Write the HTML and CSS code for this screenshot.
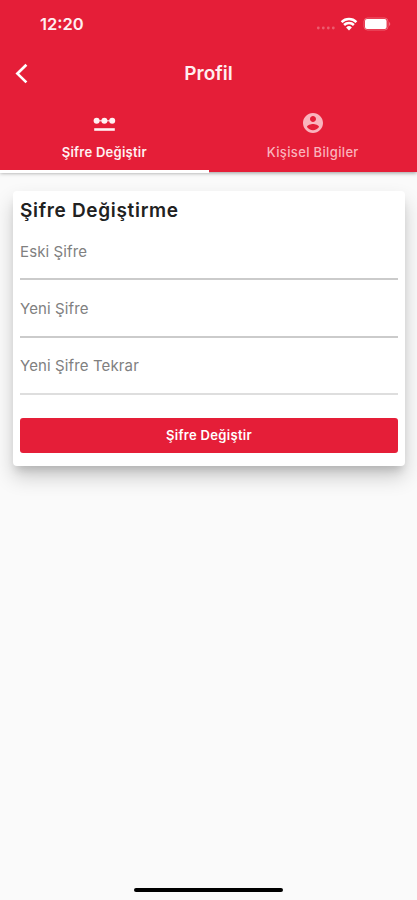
FILE: index.html
```html
<!DOCTYPE html>
<html lang="tr">
<head>
  <meta charset="UTF-8">
  <meta name="viewport" content="width=device-width, initial-scale=1.0">
  <title>Profil</title>
  <link rel="stylesheet" href="styles.css">
</head>
<body>
  <header class="header">
    <div class="status">
      <span class="time">12:20</span>
      <svg class="signal" width="20" height="4" viewBox="0 0 20 4">
        <circle cx="2.3" cy="2" r="1.4"/><circle cx="7.3" cy="2" r="1.4"/><circle cx="12.3" cy="2" r="1.4"/><circle cx="17.3" cy="2" r="1.4"/>
      </svg>
      <svg class="wifi" width="18" height="14" viewBox="0 0 18 14">
        <path d="M1.6 5.1a10.4 10.4 0 0 1 14.8 0M4.1 8a6.9 6.9 0 0 1 9.8 0"/>
        <path class="wifi-dot" d="M9 13.6L6.1 10.5a4.1 4.1 0 0 1 5.8 0z"/>
      </svg>
      <svg class="battery" width="28" height="14" viewBox="0 0 28 14">
        <rect class="battery-case" x="1" y="1" width="24" height="12" rx="3.5"/>
        <rect x="2" y="2" width="21.6" height="10" rx="2"/>
        <path class="battery-tip" d="M26 5v4a2.2 2.2 0 0 0 0-4z"/>
      </svg>
    </div>
    <div class="topbar">
      <a href="#" class="back">
        <svg width="14" height="22" viewBox="0 0 14 22"><path d="M12.4 1.8L3.4 10.6l9 8.8"/></svg>
      </a>
      <h1 class="title">Profil</h1>
    </div>
    <nav class="tabs">
      <a href="#" class="tab active">
        <svg width="24" height="24" viewBox="0 0 24 24">
          <path d="M2.2 17.2h20.6v2.6H2.2z"/>
          <circle cx="4.6" cy="9.8" r="3"/><circle cx="12.4" cy="9.8" r="3"/><circle cx="20.2" cy="9.8" r="3"/>
          <path d="M4 9.3h16v1H4z"/>
        </svg>
        <span>Şifre Değiştir</span>
      </a>
      <a href="#" class="tab">
        <svg width="24" height="24" viewBox="0 0 24 24">
          <path d="M12 2C6.48 2 2 6.48 2 12s4.48 10 10 10 10-4.48 10-10S17.52 2 12 2zm0 3c1.66 0 3 1.34 3 3s-1.34 3-3 3-3-1.34-3-3 1.34-3 3-3zm0 14.2c-2.5 0-4.71-1.28-6-3.22.03-1.99 4-3.08 6-3.08 1.99 0 5.97 1.09 6 3.08-1.29 1.94-3.5 3.22-6 3.22z"/>
        </svg>
        <span>Kişisel Bilgiler</span>
      </a>
    </nav>
  </header>

  <main class="content">
    <form class="card">
      <h2 class="card-title">Şifre Değiştirme</h2>
      <input class="field" type="password" placeholder="Eski Şifre">
      <input class="field" type="password" placeholder="Yeni Şifre">
      <input class="field last" type="password" placeholder="Yeni Şifre Tekrar">
      <button class="submit" type="button">Şifre Değiştir</button>
    </form>
  </main>

  <div class="home-bar"></div>
</body>
</html>
```
FILE: styles.css
```css
* {
  margin: 0;
  padding: 0;
  box-sizing: border-box;
  font-family: Inter, "Liberation Sans", sans-serif;
}

body {
  display: flex;
  flex-direction: column;
  height: 900px;
  background: #fafafa;
  overflow: hidden;
}

a {
  color: inherit;
  text-decoration: none;
}

svg {
  display: block;
  fill: currentColor;
}

.header {
  height: 172px;
  background: #e51e38;
  color: #fff;
  box-shadow: 0 1px 4px rgba(0, 0, 0, 0.4);
}

/* status bar */
.status {
  display: flex;
  align-items: center;
  height: 48px;
  padding: 0 26px 0 40px;
}

.time {
  margin-right: auto;
  font-size: 16.5px;
  font-weight: 600;
  color: #ffeef0;
}

.signal {
  margin: 8px 4px 0 0;
  opacity: 0.28;
}

.wifi {
  margin-right: 5px;
}

.wifi path {
  fill: none;
  stroke: currentColor;
  stroke-width: 2.5;
}

.wifi .wifi-dot {
  fill: currentColor;
  stroke: none;
}

.battery-case {
  fill: none;
  stroke: currentColor;
  opacity: 0.3;
}

.battery-tip {
  opacity: 0.35;
}

/* title row */
.topbar {
  display: grid;
  grid-template-columns: 60px 1fr 60px;
  align-items: center;
  height: 51px;
}

.back {
  padding-left: 14px;
}

.back path {
  fill: none;
  stroke: #fff;
  stroke-width: 2.7;
}

.title {
  font-size: 19px;
  font-weight: 600;
  line-height: 24px;
  text-align: center;
  color: #ffeef0;
}

/* tabs */
.tabs {
  display: flex;
  height: 74px;
}

.tab {
  flex: 1;
  display: flex;
  flex-direction: column;
  align-items: center;
  padding-top: 12px;
  font-size: 13px;
  font-weight: 500;
  line-height: 16px;
  letter-spacing: 0.35px;
  color: #fab4bd;
}

.tab span {
  margin-top: 9px;
}

.tab.active {
  color: #fff2f3;
  font-weight: 600;
  letter-spacing: 0.25px;
  border-bottom: 3px solid #fff;
}

/* card */
.content {
  flex: 1;
  padding: 19px 12px 0 13px;
}

.card {
  height: 275px;
  padding: 8px 7px 0;
  background: #fff;
  border-radius: 4px;
  box-shadow: 0 11px 20px rgba(0, 0, 0, 0.19), 0 7px 9px -3px rgba(0, 0, 0, 0.14);
}

.card-title {
  font-size: 19px;
  font-weight: 600;
  line-height: 24px;
  letter-spacing: 0.68px;
  color: #212121;
}

.field {
  display: block;
  width: 100%;
  height: 57.5px;
  padding: 1px 0 0;
  border: none;
  border-bottom: 2px solid #cbcbcb;
  background: none;
  font-size: 15px;
  letter-spacing: 0.12px;
  outline: none;
}

.card-title + .field {
  height: 57px;
}

.field.last {
  height: 57px;
  border-color: #dedede;
}

.field::placeholder {
  color: #808080;
  opacity: 1;
}

.submit {
  display: block;
  width: 100%;
  height: 35px;
  margin-top: 23px;
  border: none;
  border-radius: 3px;
  background: #e51e38;
  color: #fff;
  font-size: 13px;
  font-weight: 600;
  letter-spacing: 0.32px;
}

.home-bar {
  width: 149px;
  height: 4px;
  margin: 0 auto 8px;
  border-radius: 2px;
  background: #000;
}
```
